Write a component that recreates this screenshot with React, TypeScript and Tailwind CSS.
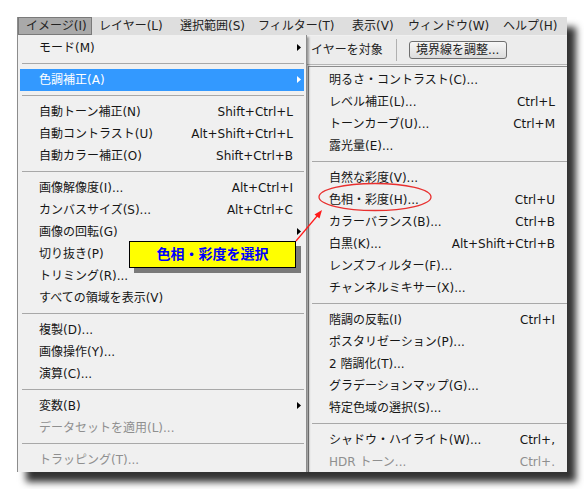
import React from 'react';

type Item = {
    label: string;
    shortcut?: string;
    sub?: boolean;
    disabled?: boolean;
    active?: boolean;
};

type Entry = Item | 'sep';

const font = "font-['DejaVu_Sans','Noto_Sans_CJK_JP',sans-serif]";

const menuBar = [
    { label: 'イメージ(I)', w: 'w-[74px]', active: true },
    { label: 'レイヤー(L)', w: 'w-[81px]' },
    { label: '選択範囲(S)', w: 'w-[78px]' },
    { label: 'フィルター(T)', w: 'w-[94px]' },
    { label: '表示(V)', w: 'w-[56px]' },
    { label: 'ウィンドウ(W)', w: 'w-[95px]' },
    { label: 'ヘルプ(H)', w: 'w-[70px]' },
];

const mainItems: Entry[] = [
    { label: 'モード(M)', sub: true },
    'sep',
    { label: '色調補正(A)', sub: true, active: true },
    'sep',
    { label: '自動トーン補正(N)', shortcut: 'Shift+Ctrl+L' },
    { label: '自動コントラスト(U)', shortcut: 'Alt+Shift+Ctrl+L' },
    { label: '自動カラー補正(O)', shortcut: 'Shift+Ctrl+B' },
    'sep',
    { label: '画像解像度(I)...', shortcut: 'Alt+Ctrl+I' },
    { label: 'カンバスサイズ(S)...', shortcut: 'Alt+Ctrl+C' },
    { label: '画像の回転(G)', sub: true },
    { label: '切り抜き(P)' },
    { label: 'トリミング(R)...' },
    { label: 'すべての領域を表示(V)' },
    'sep',
    { label: '複製(D)...' },
    { label: '画像操作(Y)...' },
    { label: '演算(C)...' },
    'sep',
    { label: '変数(B)', sub: true },
    { label: 'データセットを適用(L)...', disabled: true },
    'sep',
    { label: 'トラッピング(T)...', disabled: true },
];

const subItems: Entry[] = [
    { label: '明るさ・コントラスト(C)...' },
    { label: 'レベル補正(L)...', shortcut: 'Ctrl+L' },
    { label: 'トーンカーブ(U)...', shortcut: 'Ctrl+M' },
    { label: '露光量(E)...' },
    'sep',
    { label: '自然な彩度(V)...' },
    { label: '色相・彩度(H)...', shortcut: 'Ctrl+U' },
    { label: 'カラーバランス(B)...', shortcut: 'Ctrl+B' },
    { label: '白黒(K)...', shortcut: 'Alt+Shift+Ctrl+B' },
    { label: 'レンズフィルター(F)...' },
    { label: 'チャンネルミキサー(X)...' },
    'sep',
    { label: '階調の反転(I)', shortcut: 'Ctrl+I' },
    { label: 'ポスタリゼーション(P)...' },
    { label: '2 階調化(T)...' },
    { label: 'グラデーションマップ(G)...' },
    { label: '特定色域の選択(S)...' },
    'sep',
    { label: 'シャドウ・ハイライト(W)...', shortcut: 'Ctrl+,' },
    { label: 'HDR トーン...', shortcut: 'Ctrl+.', disabled: true },
];

function SubArrow({ white }: { white?: boolean }) {
    return (
        <svg width="4" height="7" viewBox="0 0 4 7" className="absolute right-[3px] top-[7px]">
            <path d="M0 0 L4 3.5 L0 7 Z" fill={white ? '#ffffff' : '#000000'} />
        </svg>
    );
}

function MenuRow({ item, padLeft, padRight }: { item: Item; padLeft: string; padRight: string }) {
    const color = item.active ? 'bg-[#3399ff] text-white' : item.disabled ? 'text-[#8f8f8f]' : 'text-[#161616]';
    return (
        <div className={`relative flex h-[22px] items-center justify-between ${padLeft} ${padRight} ${color}`}>
            <span className="whitespace-nowrap">{item.label}</span>
            {item.shortcut && <span className="whitespace-nowrap">{item.shortcut}</span>}
            {item.sub && <SubArrow white={item.active} />}
        </div>
    );
}

function Separator() {
    return (
        <div className="h-[10px] pt-[4px]">
            <div className="ml-[2px] h-px bg-[#a8a8a8]" />
        </div>
    );
}

export default function App() {
    return (
        <div className={`relative h-[489px] w-[584px] overflow-hidden bg-white text-[12px] ${font}`}>
            <div className="ml-[17px] mt-[17px] flex h-[455px] w-[550px] flex-col overflow-hidden border-l border-[#8c8c8c] bg-[#f0f0f0] shadow-[9px_10px_7px_rgba(0,0,0,0.8)]">
                {/* menu bar */}
                <div className="flex h-[18px] shrink-0 bg-[#dedede] text-[#222]">
                    {menuBar.map((m) => (
                        <div
                            key={m.label}
                            className={`${m.w} flex shrink-0 items-center whitespace-nowrap pl-[7px] ${
                                m.active ? 'border border-[#7a7a7a] bg-[#a9a9a9] pl-[6px]' : ''
                            }`}
                        >
                            {m.label}
                        </div>
                    ))}
                </div>

                <div className="flex min-h-0 flex-1">
                    {/* main dropdown */}
                    <div className="z-10 w-[289px] shrink-0 border-r border-[#8c8c8c] bg-[#f0f0f0] px-[2px] pt-[2px] shadow-[2px_2px_2px_rgba(0,0,0,0.35)]">
                        {mainItems.map((it, i) =>
                            it === 'sep' ? (
                                <Separator key={i} />
                            ) : (
                                <MenuRow key={i} item={it} padLeft="pl-[19px]" padRight="pr-[11px]" />
                            )
                        )}
                    </div>

                    {/* right side: options bar + submenu */}
                    <div className="flex min-w-0 flex-1 flex-col">
                        <div className="mt-[1px] flex h-[29px] shrink-0 items-center border-b border-[#b5b5b5] bg-[#ececec] pl-[4px] text-[#222]">
                            <span className="whitespace-nowrap">イヤーを対象</span>
                            <div className="ml-[13px] h-[22px] w-px bg-[#b0b0b0]" />
                            <div className="ml-[12px] flex h-[18px] w-[98px] items-center justify-center whitespace-nowrap rounded-[3px] border border-[#6f6f6f] bg-gradient-to-b from-[#f7f7f7] to-[#dcdcdc]">
                                境界線を調整...
                            </div>
                        </div>
                        <div className="ml-[1px] mt-[1px] flex-1 border-l border-t border-[#8c8c8c] bg-[#f0f0f0] pl-[1px] pt-[2px]">
                            {subItems.map((it, i) =>
                                it === 'sep' ? (
                                    <Separator key={i} />
                                ) : (
                                    <MenuRow key={i} item={it} padLeft="pl-[19px]" padRight="pr-[12px]" />
                                )
                            )}
                        </div>
                    </div>
                </div>
            </div>

            {/* callout */}
            <div className="absolute left-[129px] top-[241px] z-20 flex h-[27px] w-[167px] items-center justify-center border border-black bg-[#ffff00] text-[14px] font-bold text-[#0000ff] shadow-[5px_5px_0_#7a7a7a]">
                色相・彩度を選択
            </div>

            {/* annotation: arrow + ellipse */}
            <svg className="pointer-events-none absolute left-0 top-0 z-20" width="584" height="489" viewBox="0 0 584 489">
                <ellipse cx="375" cy="197" rx="56" ry="13.5" fill="none" stroke="#e8302f" strokeWidth="1.3" />
                <line x1="296" y1="241" x2="318" y2="215" stroke="#ff1a1a" strokeWidth="1.2" />
                <path d="M322 210 L314.5 214.5 L319.5 218.5 Z" fill="#ff1a1a" />
            </svg>
        </div>
    );
}
